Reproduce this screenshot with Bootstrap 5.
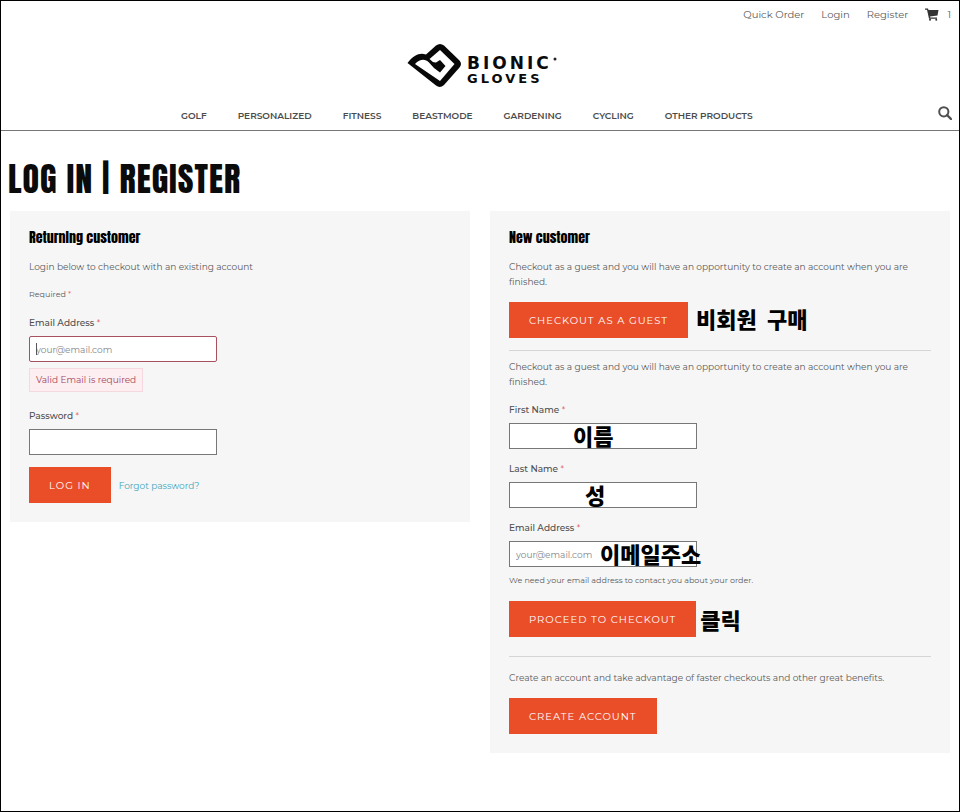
<!DOCTYPE html>
<html lang="en">
<head>
<meta charset="utf-8">
<meta name="viewport" content="width=device-width, initial-scale=1">
<title>Log In | Register - Bionic Gloves</title>
<link href="https://cdn.jsdelivr.net/npm/bootstrap@5.3.0/dist/css/bootstrap.min.css" rel="stylesheet">
<style>
  body { font-family: Montserrat, Inter, "Liberation Sans", sans-serif; font-size: 9px; line-height: 15px; color: #5a5a5a; background: #fff; border: 1px solid #000; min-height: 100vh; }
  a { color: inherit; text-decoration: none; }
  .top-links { gap: 17px; padding: 6px 8px 0; height: 28px; font-size: 10px; }
  .brand-logo { width: 152px; height: 46px; margin: 14px 0 0 6px; }
  .main-menu { padding: 17px 0 6px; border-bottom: 1px solid #777; }
  .menu-links { gap: 31px; font-weight: 600; color: #4b4b4b; padding-left: 180px; }
  .search-btn { margin: 0 7px 4px 0; }
  h1, h2 { font-family: Anton, Roboto, sans-serif; font-weight: 400; color: #0b0b0b; margin: 0; }
  h1 { font-size: 34px; line-height: 40px; letter-spacing: 1px; padding: 28px 7px 12px; }
  h2 { font-size: 14px; line-height: 18px; margin-bottom: 12px; color: #000; }
  .panels { padding: 0 9px; }
  .panel-gap { --bs-gutter-x: 20px; }
  .panel { background: #f6f6f6; padding: 18px 19px 19px; }
  .panel p { margin: 0 0 13px; }
  .panel label { display: block; font-weight: 500; line-height: 16px; color: #505050; margin-bottom: 5px; }
  .req { color: #e0525a; font-weight: 400; }
  .note { font-size: 8px; }
  .field { max-width: 188px; margin-bottom: 12px; }
  .field-tight { margin-bottom: 6px; }
  .field .form-control { height: 26px; padding: 0 6px; font-size: 9px; border: 1px solid #777; border-radius: 0; color: #444; background: #fff; box-shadow: none; }
  .field .form-control.bad { border-color: #a9505f; border-radius: 2px; }
  .field .form-control::placeholder { color: #858585; opacity: 1; }
  .caret { width: 1px; height: 12px; left: 7px; top: 7px; background: #555; }
  .error-box { display: inline-block; height: 24px; line-height: 22px; padding: 0 6px; margin: 6px 0 4px; color: #a3455a; background: #fdeef1; border: 1px solid #f5d9de; }
  .cta { height: 36px; padding: 0 20px; border: 0; border-radius: 0; background: #e94e29; color: #fff; font-size: 10px; letter-spacing: 1px; white-space: nowrap; }
  .cta:hover { background: #d14321; color: #fff; }
  .forgot { color: #3fa6bd; }
  .rule { height: 1px; margin: 12px 0 8px; border: 0; background: #d5d5d5; opacity: 1; }
  .rule-wide { margin: 19px 0 13px; }
  .ko { font-family: "Noto Sans CJK KR", sans-serif; font-weight: 900; font-size: 22px; line-height: 24px; color: #000; white-space: pre; }
  .ko-over { position: absolute; top: 0; pointer-events: none; }
  .at-first { left: 64px; }
  .at-last { left: 76px; }
  .at-mail { left: 91px; }
</style>
<script src="https://cdn.jsdelivr.net/npm/bootstrap@5.3.0/dist/js/bootstrap.bundle.min.js"></script>
</head>
<body>
<header>
  <div class="top-links d-flex justify-content-end">
    <a href="#">Quick Order</a>
    <a href="#">Login</a>
    <a href="#">Register</a>
    <a href="#" class="d-flex" aria-label="Cart, 1 item">
      <svg class="me-2" width="14" height="14" viewBox="0 0 28 28" fill="#333" aria-hidden="true"><path d="M0 3h6l1 3H27l-2 11-15 2 .5 2H24v2.500H8L4 5.500H0z"/><circle cx="10" cy="25.500" r="2"/><circle cx="22.500" cy="25.500" r="2"/></svg>1</a>
  </div>
  <div class="d-flex justify-content-center">
    <a href="#" class="brand-logo" aria-label="Bionic Gloves">
      <svg width="152" height="46" viewBox="0 0 152 46" aria-hidden="true">
        <path fill="#080808" fill-rule="evenodd" d="M.5 20C7 11.500 13 9.500 19 11.500L29 2.500Q33-.5 37 2.500L52.500 17.500Q55.500 21 52.500 24.500L37 42Q33 45.500 29 42.500ZM8 21L33 38L47.500 21L33 7L22.500 16Q26 20 29 19.500L33 17L38.500 23L33 29.500L27 25L22 19.500C18 15.500 13 16 8 21Z"/>
        <g fill="#0a0a0a" font-family="DejaVu Sans, sans-serif" font-weight="700">
          <text x="60" y="26" font-size="17" letter-spacing="3">BIONIC</text>
          <text x="60" y="40" font-size="13" letter-spacing="3">GLOVES</text>
        </g>
        <circle cx="148" cy="16" r="1.500" fill="#222"/>
      </svg>
    </a>
  </div>
  <nav class="main-menu d-flex align-items-center justify-content-between">
    <div class="menu-links d-flex">
      <a href="#">GOLF</a><a href="#">PERSONALIZED</a><a href="#">FITNESS</a><a href="#">BEASTMODE</a><a href="#">GARDENING</a><a href="#">CYCLING</a><a href="#">OTHER PRODUCTS</a>
    </div>
    <button type="button" class="search-btn btn p-0 border-0 d-flex" aria-label="Search">
      <svg width="14" height="14" viewBox="0 0 14 14" fill="none" stroke="#505050" stroke-width="2" aria-hidden="true"><circle cx="5.800" cy="5.800" r="4.600"/><path d="M9 9l4 4" stroke-width="2.400" stroke-linecap="round"/></svg>
    </button>
  </nav>
</header>
<main>
  <h1>LOG IN | REGISTER</h1>
  <div class="panels">
    <div class="row panel-gap align-items-start">
      <div class="col-6">
        <form class="panel">
          <h2>Returning customer</h2>
          <p>Login below to checkout with an existing account</p>
          <p class="note">Required <span class="req">*</span></p>
          <div class="field">
            <label for="login-email">Email Address <span class="req">*</span></label>
            <div class="position-relative">
              <input id="login-email" type="email" class="form-control bad" placeholder="your@email.com">
              <span class="caret position-absolute"></span>
            </div>
            <div class="error-box">Valid Email is required</div>
          </div>
          <div class="field">
            <label for="login-pass">Password <span class="req">*</span></label>
            <input id="login-pass" type="password" class="form-control">
          </div>
          <div class="d-flex align-items-center">
            <button type="button" class="btn cta">LOG IN</button>
            <a href="#" class="forgot ms-2">Forgot password?</a>
          </div>
        </form>
      </div>
      <div class="col-6">
        <form class="panel">
          <h2>New customer</h2>
          <p>Checkout as a guest and you will have an opportunity to create an account when you are finished.</p>
          <div class="d-flex align-items-center">
            <button type="button" class="btn cta">CHECKOUT AS A GUEST</button>
            <span class="ko ms-2 mb-1">비회원  구매</span>
          </div>
          <hr class="rule">
          <p>Checkout as a guest and you will have an opportunity to create an account when you are finished.</p>
          <div class="field">
            <label for="first">First Name <span class="req">*</span></label>
            <div class="position-relative">
              <input id="first" type="text" class="form-control">
              <span class="ko ko-over at-first">이름</span>
            </div>
          </div>
          <div class="field">
            <label for="last">Last Name <span class="req">*</span></label>
            <div class="position-relative">
              <input id="last" type="text" class="form-control">
              <span class="ko ko-over at-last">성</span>
            </div>
          </div>
          <div class="field field-tight">
            <label for="guest-email">Email Address <span class="req">*</span></label>
            <div class="position-relative">
              <input id="guest-email" type="email" class="form-control" placeholder="your@email.com">
              <span class="ko ko-over at-mail">이메일주소</span>
            </div>
          </div>
          <p class="note">We need your email address to contact you about your order.</p>
          <div class="d-flex align-items-center">
            <button type="button" class="btn cta">PROCEED TO CHECKOUT</button>
            <span class="ko ms-1">클릭</span>
          </div>
          <hr class="rule rule-wide">
          <p>Create an account and take advantage of faster checkouts and other great benefits.</p>
          <button type="button" class="btn cta">CREATE ACCOUNT</button>
        </form>
      </div>
    </div>
  </div>
</main>
</body>
</html>
